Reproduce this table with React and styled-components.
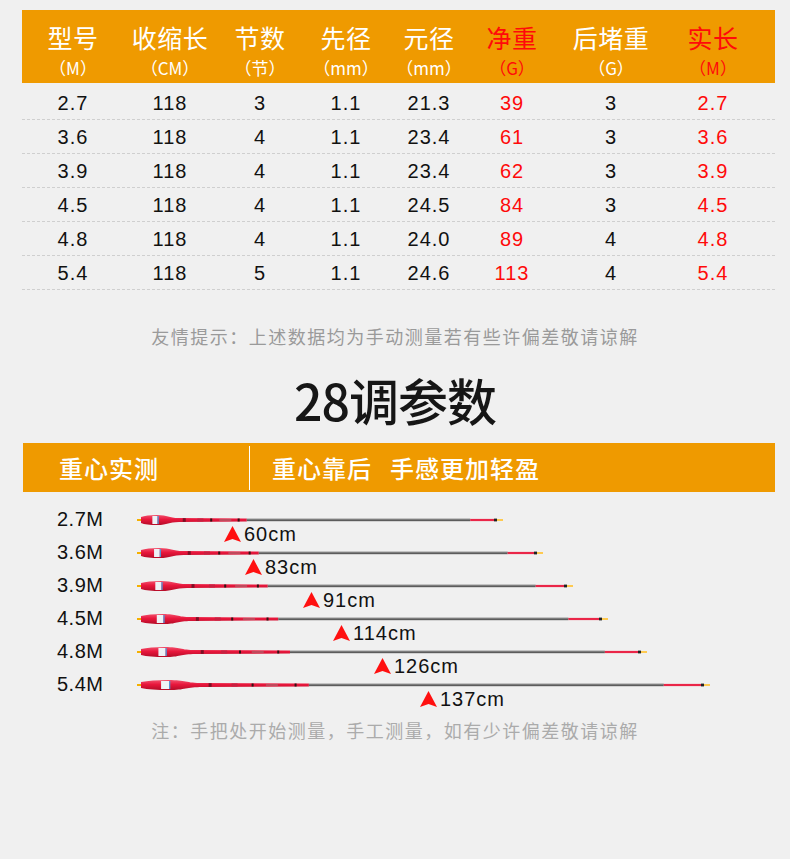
import React from 'react';
import styled, { createGlobalStyle } from 'styled-components';

const GlobalStyle = createGlobalStyle`
    body {
        margin: 0;
        background: #f0f0f0;
        font-family: "Noto Sans CJK SC", "Noto Sans", sans-serif;
    }
`;

const ORANGE = '#ef9a00';
const RED = '#ff0a0a';
const COLS = '102px 92px 88px 84px 82px 84px 114px 90px';

const columns = [
    { title: '型号', unit: '（M）' },
    { title: '收缩长', unit: '（CM）' },
    { title: '节数', unit: '（节）' },
    { title: '先径', unit: '（mm）' },
    { title: '元径', unit: '（mm）' },
    { title: '净重', unit: '（G）', red: true },
    { title: '后堵重', unit: '（G）' },
    { title: '实长', unit: '（M）', red: true },
];

const specs = [
    ['2.7', '118', '3', '1.1', '21.3', '39', '3', '2.7'],
    ['3.6', '118', '4', '1.1', '23.4', '61', '3', '3.6'],
    ['3.9', '118', '4', '1.1', '23.4', '62', '3', '3.9'],
    ['4.5', '118', '4', '1.1', '24.5', '84', '3', '4.5'],
    ['4.8', '118', '4', '1.1', '24.0', '89', '4', '4.8'],
    ['5.4', '118', '5', '1.1', '24.6', '113', '4', '5.4'],
];

// length = rod length in px, balance = marker offset from the butt in px
const rods = [
    { label: '2.7M', length: 366, balance: 87, text: '60cm' },
    { label: '3.6M', length: 406, balance: 108, text: '83cm' },
    { label: '3.9M', length: 436, balance: 166, text: '91cm' },
    { label: '4.5M', length: 471, balance: 196, text: '114cm' },
    { label: '4.8M', length: 510, balance: 237, text: '126cm' },
    { label: '5.4M', length: 573, balance: 283, text: '137cm' },
];

function Rod({ length, id }) {
    const L = length;
    const b1 = L * 0.055;
    const b2 = L * 0.115;
    const h = L * 0.3;
    const tip = L - 9 - L * 0.065;
    const mid = b1 + (b2 - b1) * 0.5;
    const handle = `M4,4 Q${b1 * 0.45},2 ${b1},2 C${mid},2 ${mid},5.1 ${b2},5.1 L${h},5.5 L${h},8.5 L${b2},8.9 C${mid},8.9 ${mid},12 ${b1},12 Q${b1 * 0.45},12 4,10 Z`;
    return (
        <svg width={L} height="14" viewBox={`0 0 ${L} 14`}>
            <defs>
                <linearGradient id={id} x1="0" y1="0" x2="0" y2="1">
                    <stop offset="0" stopColor="#f2506c" />
                    <stop offset="0.45" stopColor="#e8173c" />
                    <stop offset="1" stopColor="#b50c28" />
                </linearGradient>
            </defs>
            <rect x="0" y="6" width="5" height="2" fill="#f5b000" />
            <path d={handle} fill={`url(#${id})`} />
            <rect x={L * 0.042} y="3" width={L * 0.014} height="8" fill="#eef2f6" />
            <rect x={L * 0.056} y="3" width="1.2" height="8" fill="#4b9be0" />
            <rect x={L * 0.125} y="5.2" width="3" height="3.6" fill="#7a1024" />
            <rect x={L * 0.165} y="5.5" width="6" height="3" fill="#c82040" />
            <rect x={L * 0.2} y="5.5" width="2" height="3" fill="#2e1414" />
            <rect x={L * 0.225} y="6" width="12" height="2" fill="#c04a5c" />
            <rect x={L * 0.275} y="5.5" width="2" height="3" fill="#2e1414" />
            <rect x={h} y="5.8" width={tip - h} height="2.4" fill="#5c5c5c" />
            <rect x={h} y="5.8" width={tip - h} height="0.9" fill="#8c8c8c" />
            <rect x={tip} y="5.9" width={L - 9 - tip} height="2.2" fill="#ea2648" />
            <rect x={L - 9} y="5.6" width="3" height="2.8" fill="#222" />
            <rect x={L - 6} y="6.1" width="6" height="1.8" fill="#ffc640" />
        </svg>
    );
}

function Arrow() {
    return (
        <svg width="17" height="16" viewBox="0 0 17 16">
            <polygon points="8.5,0 17,16 8.5,13 0,16" fill="#ff1010" />
        </svg>
    );
}

export default function App() {
    return (
        <Page>
            <GlobalStyle />
            <SpecTable>
                <HeaderRow>
                    {columns.map((c) => (
                        <HeadCell key={c.title} $red={c.red}>
                            <HeadTitle>{c.title}</HeadTitle>
                            <HeadUnit>{c.unit}</HeadUnit>
                        </HeadCell>
                    ))}
                </HeaderRow>
                <TableBody>
                    {specs.map((row) => (
                        <DataRow key={row[0]}>
                            {row.map((v, i) => (
                                <Cell key={i} $red={columns[i].red}>{v}</Cell>
                            ))}
                        </DataRow>
                    ))}
                </TableBody>
            </SpecTable>

            <Note $tone="#9a9a9a">友情提示：上述数据均为手动测量若有些许偏差敬请谅解</Note>

            <Heading>28调参数</Heading>

            <Band>
                <BandLead>重心实测</BandLead>
                <BandDivider />
                <BandText>
                    重心靠后<BandGap>手感更加轻盈</BandGap>
                </BandText>
            </Band>

            <RodList>
                {rods.map((r, i) => (
                    <RodRow key={r.label}>
                        <RodLabel>{r.label}</RodLabel>
                        <Rod length={r.length} id={`rodRed${i}`} />
                        <Marker style={{ left: 80 + r.balance }}>
                            <Arrow />
                            <MarkerText>{r.text}</MarkerText>
                        </Marker>
                    </RodRow>
                ))}
            </RodList>

            <Note $tone="#ababab" $gap={17}>注：手把处开始测量，手工测量，如有少许偏差敬请谅解</Note>
        </Page>
    );
}

const Page = styled.div`
    width: 790px;
    min-height: 859px;
    padding-top: 10px;
    box-sizing: border-box;
    background: #f0f0f0;
`;

const SpecTable = styled.div`
    margin-left: 22px;
    width: 753px;
`;

const HeaderRow = styled.div`
    display: grid;
    grid-template-columns: ${COLS};
    height: 73px;
    background: ${ORANGE};
`;

const HeadCell = styled.div`
    display: flex;
    flex-direction: column;
    align-items: center;
    padding-top: 12px;
    color: ${(p) => (p.$red ? RED : '#fff')};
`;

const HeadTitle = styled.div`
    font-size: 25px;
    line-height: 30px;
    letter-spacing: 0.5px;
`;

const HeadUnit = styled.div`
    margin-top: 6px;
    font-size: 17px;
    line-height: 20px;
`;

const TableBody = styled.div`
    padding-top: 3px;
`;

const DataRow = styled.div`
    display: grid;
    grid-template-columns: ${COLS};
    height: 34px;
    align-items: center;
    border-bottom: 1px dashed #cfcfcf;
    box-sizing: border-box;
`;

const Cell = styled.div`
    text-align: center;
    font-family: "Liberation Sans", Arial, sans-serif;
    font-size: 20px;
    letter-spacing: 1px;
    padding-top: 2px;
    color: ${(p) => (p.$red ? RED : '#111')};
`;

const Note = styled.div`
    margin-top: ${(p) => p.$gap || 34}px;
    text-align: center;
    font-size: 18px;
    line-height: 24px;
    letter-spacing: 1.5px;
    color: ${(p) => p.$tone};
`;

const Heading = styled.h1`
    margin: 21px 0 0;
    text-align: center;
    font-size: 50px;
    line-height: 60px;
    font-weight: 500;
    letter-spacing: -1px;
    color: #161616;
`;

const Band = styled.div`
    display: flex;
    align-items: center;
    margin: 14px 0 0 23px;
    width: 752px;
    height: 49px;
    background: ${ORANGE};
    color: #fff;
    font-size: 24px;
    font-weight: 500;
    letter-spacing: 1px;
`;

const BandLead = styled.div`
    width: 190px;
    padding-left: 36px;
`;

const BandDivider = styled.div`
    width: 1px;
    height: 44px;
    background: #fff;
`;

const BandText = styled.div`
    padding-left: 22px;
`;

const BandGap = styled.span`
    margin-left: 18px;
`;

const RodList = styled.div`
    margin: 11px 0 0 57px;
    display: flex;
    flex-direction: column;
`;

const RodRow = styled.div`
    position: relative;
    display: flex;
    align-items: center;
    height: 33px;
`;

const RodLabel = styled.div`
    width: 80px;
    font-family: "Liberation Sans", Arial, sans-serif;
    font-size: 20px;
    letter-spacing: 0.5px;
    color: #111;
`;

const Marker = styled.div`
    position: absolute;
    top: 21px;
    display: flex;
    align-items: center;
    gap: 3px;
    height: 20px;
`;

const MarkerText = styled.span`
    font-family: "Liberation Sans", Arial, sans-serif;
    font-size: 20px;
    letter-spacing: 1px;
    color: #111;
`;
